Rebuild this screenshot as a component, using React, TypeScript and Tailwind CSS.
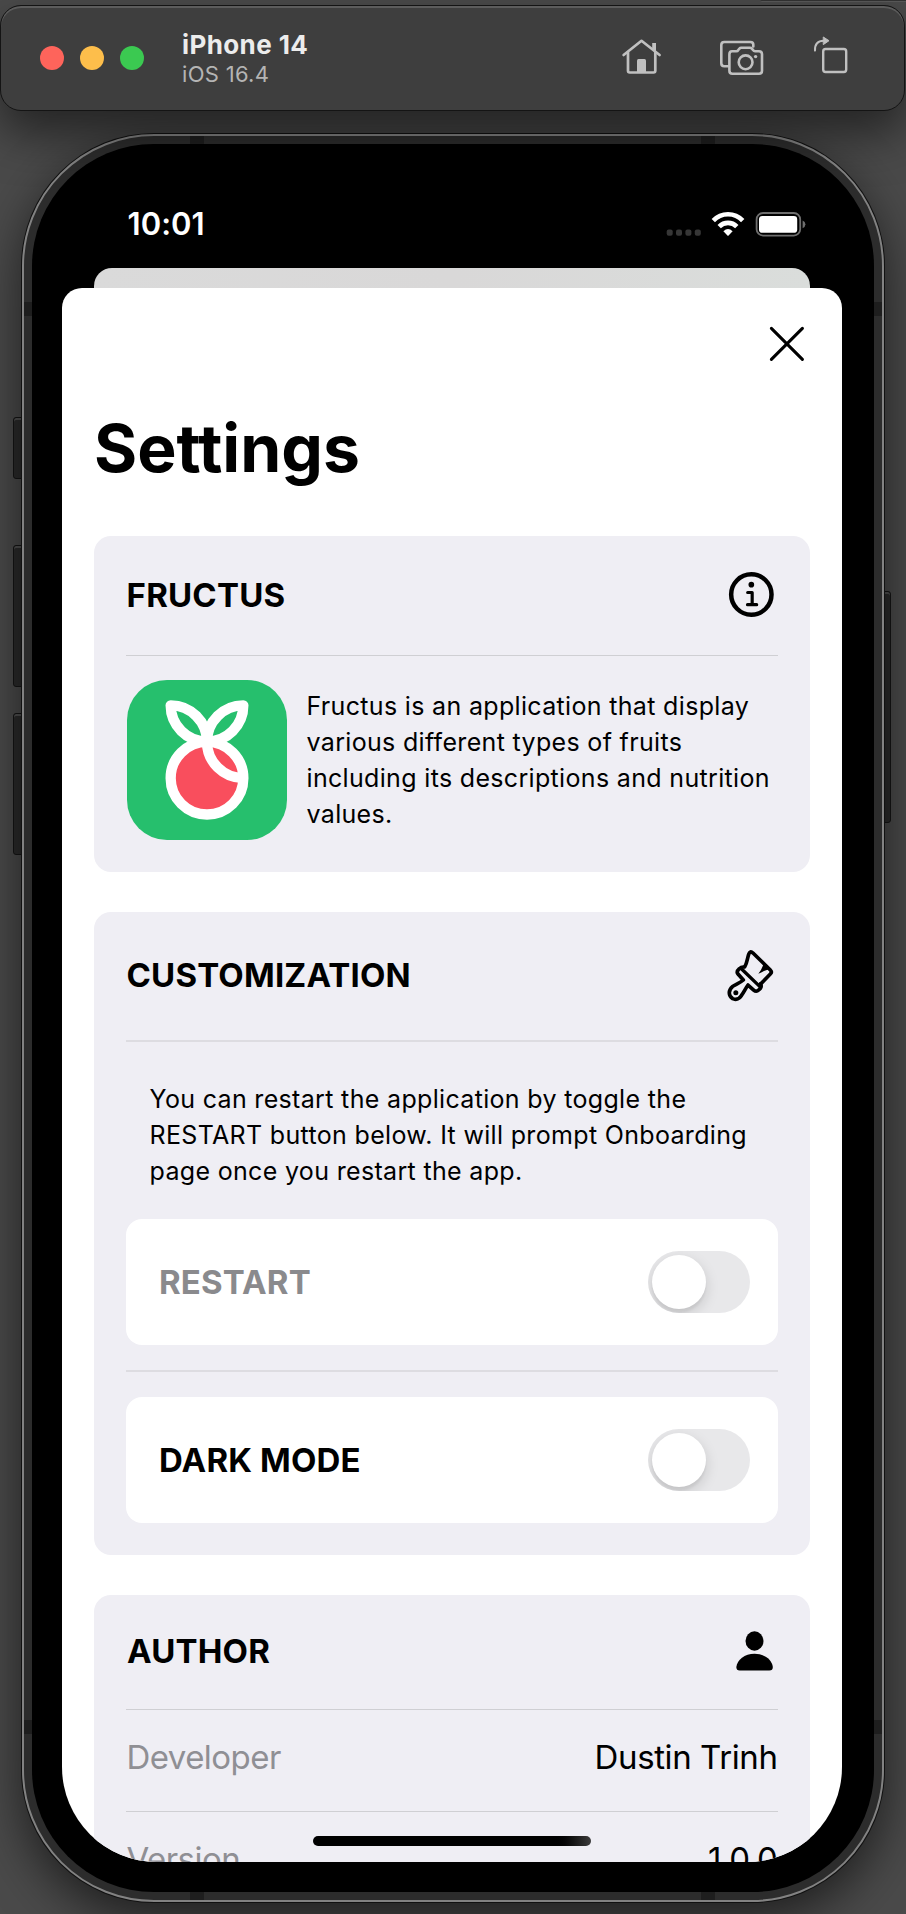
import type { ReactNode } from "react";

function HomeIcon() {
  return (
    <svg viewBox="620 36 42 42" className="h-[42px] w-[42px]" fill="none" stroke="#c0c0c0" strokeWidth="2.7" strokeLinecap="round" strokeLinejoin="round">
      <path d="M623.6 54 L641.5 39.8 L659.6 54" />
      <path d="M628 51.5 V69.8 Q628 71.5 629.7 71.5 H653.6 Q655.3 71.5 655.3 69.8 V51.5" />
      <path d="M652.2 42 H656 V50.5 L652.2 47.5 Z" fill="#c0c0c0" stroke="none" />
      <path d="M637 72 V59.5 Q637 58 638.5 58 H644.5 Q646 58 646 59.5 V72 Z" fill="#c0c0c0" stroke="none" />
    </svg>
  );
}

function ScreenshotIcon() {
  return (
    <svg viewBox="718 36 46 42" className="h-[42px] w-[46px]" fill="none" stroke="#c0c0c0" strokeWidth="2.6" strokeLinecap="round" strokeLinejoin="round">
      <path d="M753.3 45.5 V43.8 Q753.3 41 750.5 41 H724.3 Q721.3 41 721.3 44 V62.3 Q721.3 65.3 724.3 65.3 H728" />
      <path d="M732 50.2 H736.3 Q737.6 50.2 738.3 49 L739.4 47.6 Q740 46.8 741.3 46.8 H750 Q751.3 46.8 751.9 47.6 L753 49 Q753.8 50.2 755 50.2 H759 Q762 50.2 762 53.2 V69.8 Q762 72.8 759 72.8 H732.4 Q729.4 72.8 729.4 69.8 V53.2 Q729.4 50.2 732 50.2 Z" />
      <circle cx="745.6" cy="61.3" r="6.9" />
      <circle cx="755.6" cy="55.6" r="1.7" fill="#c0c0c0" stroke="none" />
    </svg>
  );
}

function RotateIcon() {
  return (
    <svg viewBox="812 34 36 46" className="h-[46px] w-9" fill="none" stroke="#c0c0c0" strokeWidth="2.4" strokeLinecap="round" strokeLinejoin="round">
      <rect x="823.2" y="48" width="23" height="23" rx="2.4" />
      <path d="M815 49.6 C814.6 43 818 39.8 823.5 39.8" strokeWidth="2" />
      <path d="M823.6 36.2 L829 39.7 L823.6 43.4 Z" fill="#c0c0c0" strokeWidth="1" />
    </svg>
  );
}

function StatusIcons() {
  return (
    <svg viewBox="664 208 144 30" className="h-[30px] w-36">
      <g fill="#363636">
        <rect x="666.7" y="228.6" width="6" height="6.2" rx="2" />
        <rect x="676" y="228.6" width="6" height="6.2" rx="2" />
        <rect x="685.4" y="228.6" width="6" height="6.2" rx="2" />
        <rect x="694.8" y="228.6" width="6" height="6.2" rx="2" />
      </g>
      <g fill="none" stroke="#fff" strokeWidth="4.6">
        <path d="M713.3 219.6 A20.3 20.3 0 0 1 742.7 219.6" />
        <path d="M719.2 225.6 A12.2 12.2 0 0 1 736.8 225.6" />
      </g>
      <path d="M723.4 230.3 Q728 225.7 732.6 230.3 L728.6 234.4 Q728 235 727.4 234.4 Z" fill="#fff" />
      <rect x="756.6" y="212" width="43.6" height="22.6" rx="6.4" fill="none" stroke="#6e6e6e" strokeWidth="1.8" />
      <rect x="759" y="215" width="38.2" height="16.8" rx="3.4" fill="#fff" />
      <path d="M802.6 219.4 Q805.4 220.6 805.4 223.3 Q805.4 226 802.6 227.2 Z" fill="#6e6e6e" />
    </svg>
  );
}

function InfoIcon() {
  return (
    <svg viewBox="825 873 140 140" className="mr-[3px] h-[46.7px] w-[46.7px]" fill="none" stroke="#000" strokeLinecap="round" strokeLinejoin="round">
      <circle cx="895" cy="943.5" r="60.5" strokeWidth="13.5" />
      <circle cx="895" cy="914" r="8.5" fill="#000" stroke="none" />
      <path d="M884 937.5 H897.5 V973.5 M883.5 974 H911" strokeWidth="9.5" />
    </svg>
  );
}

function BrushIcon() {
  return (
    <svg viewBox="815 920 153 170" className="mr-[2px] h-[56.7px] w-[51px]" fill="none" stroke="#000" strokeWidth="11" strokeLinecap="round" strokeLinejoin="round">
      <path d="M874.5 979 C881 968 882 954 886 942 Q890 930 899 938 L951 989 Q957 995 951 1001 L921 1032" />
      <path d="M864 985 L919 1038" strokeWidth="10" />
      <path d="M872 980 Q864 979 858 985 Q848 994 854 1001 L870 1019 C860 1028 846 1032 838 1038 C824 1050 825 1067 838 1075 C849 1080 859 1074 864 1066 C872 1055 876 1045 884 1034 L901 1049 Q909 1056 916 1049 L921 1044 Q926 1037 921 1031" />
      <path d="M932 968 L949 986 L932 992 Q924 997 915 1000 Q925 988 928 978 Z" fill="#000" stroke="none" />
      <circle cx="847.5" cy="1057" r="7.5" fill="#000" stroke="none" />
    </svg>
  );
}

function PersonIcon() {
  return (
    <svg viewBox="845 211 117 125" className="mr-[4.5px] h-[41.7px] w-[39px]" fill="#000">
      <ellipse cx="903.5" cy="244" rx="27" ry="29" />
      <path d="M859 332.5 Q849 332.5 849 322 C851 300 874 282 903.5 282 C933 282 956 300 958.5 322 Q958.5 332.5 948 332.5 Z" />
    </svg>
  );
}

function FructusLogo() {
  return (
    <div className="ml-[0.5px] h-40 w-40 shrink-0 overflow-hidden rounded-[40px] bg-[#26bf6d]">
      <svg viewBox="140 120 480 480" className="h-40 w-40" fill="none" stroke="#fff" strokeWidth="31" strokeLinejoin="round">
        <circle cx="380" cy="414.5" r="109" fill="#f94e5d" />
        <path d="M271 196 A109 109 0 0 1 380 305 A109 109 0 0 1 271 196 Z" />
        <path d="M489 196 A109 109 0 0 0 380 305 A109 109 0 0 0 489 196 Z" />
        <path d="M380 305 A109 109 0 0 0 489 414" />
      </svg>
    </div>
  );
}

function Toggle() {
  return (
    <div className="h-[62px] w-[102px] overflow-hidden rounded-full bg-[#e8e8ea] p-1">
      <div className="h-[54px] w-[54px] rounded-full bg-white shadow-[0_5px_14px_rgba(0,0,0,0.15),0_4px_2px_rgba(0,0,0,0.04)]" />
    </div>
  );
}

function CardHeader({ title, className, icon }: { title: string; className: string; icon: ReactNode }) {
  return (
    <div className={`flex items-center justify-between ${className}`}>
      <h2 className="text-[33px] leading-10 font-bold tracking-[0.18px]">{title}</h2>
      {icon}
    </div>
  );
}

function ToggleRow({ label, className }: { label: string; className: string }) {
  return (
    <div className="flex h-[126px] items-center justify-between rounded-[16px] bg-white pr-7 pl-[33px]">
      <span className={`text-[33px] leading-10 font-bold tracking-[0.15px] ${className}`}>{label}</span>
      <Toggle />
    </div>
  );
}

function InfoRow({ label, value }: { label: string; value: string }) {
  return (
    <div className="flex h-[101px] shrink-0 items-center justify-between pr-[0.5px] pb-[7px] pl-[0.5px] text-[33px] leading-10">
      <span className="tracking-[-0.55px] text-[#8f8f94]">{label}</span>
      <span className="tracking-[-0.4px]">{value}</span>
    </div>
  );
}

function SideButton({ className }: { className: string }) {
  return <div className={`absolute border border-[#151515] bg-[#2b2b2b] shadow-[inset_0_2px_0_#505050] ${className}`} />;
}

export default function App() {
  return (
    <div className="h-[1914px] w-[906px] overflow-hidden bg-[#4a4a4a] font-['Inter',sans-serif] text-black">
      <div className="relative z-10 flex justify-end">
        <div className="h-[2px] w-[146px] rounded-bl-lg border-b border-[#5a5a5a] bg-[#333]" />
      </div>
      <header className="relative z-10 mt-[3px] flex h-[106px] w-[905px] items-center justify-between rounded-[21px] border border-[#141414] bg-[#3e3e3e] pr-[56px] pl-[39px] shadow-[inset_0_2px_0_#5c5c5c,0_22px_46px_rgba(0,0,0,0.5)]">
        <div className="flex items-center">
          <div className="flex gap-4">
            <span className="h-6 w-6 rounded-full bg-[#fe645b]" />
            <span className="h-6 w-6 rounded-full bg-[#fdbe4b]" />
            <span className="h-6 w-6 rounded-full bg-[#3bc951]" />
          </div>
          <div className="ml-[38px]">
            <div className="text-[26px] leading-[30px] font-bold tracking-[0.4px] text-[#ececec]">iPhone 14</div>
            <div className="mt-px text-[22px] leading-[26px] tracking-[0.3px] text-[#b4b4b4]">iOS 16.4</div>
          </div>
        </div>
        <div className="flex items-center">
          <HomeIcon />
          <span className="ml-14 flex"><ScreenshotIcon /></span>
          <span className="ml-12 flex"><RotateIcon /></span>
        </div>
      </header>

      <div className="relative mt-[23px] ml-[22px] h-[1768px] w-[862px]">
        <SideButton className="top-[283px] -left-[9px] h-[62px] w-[10px] rounded-l-[3px]" />
        <SideButton className="top-[411px] -left-[9px] h-[142px] w-[10px] rounded-l-[3px]" />
        <SideButton className="top-[579px] -left-[9px] h-[142px] w-[10px] rounded-l-[3px]" />
        <SideButton className="top-[457px] -right-[7px] h-[232px] w-[8px] rounded-r-[3px]" />

        <div className="relative h-[1768px] w-[862px] rounded-[132px] border-2 border-[#828282] bg-[#2c2c2c] p-2 shadow-[0_0_0_1px_#111,0_16px_50px_rgba(0,0,0,0.6)]">
          <div className="absolute top-0 left-[166px] h-2 w-[14px] bg-[#1e1e1e]" />
          <div className="absolute top-0 left-[677px] h-2 w-[14px] bg-[#1e1e1e]" />
          <div className="absolute bottom-0 left-[166px] h-2 w-[14px] bg-[#1e1e1e]" />
          <div className="absolute bottom-0 left-[677px] h-2 w-[14px] bg-[#1e1e1e]" />
          <div className="absolute top-[166px] left-0 h-[14px] w-2 bg-[#1e1e1e]" />
          <div className="absolute top-[166px] right-0 h-[14px] w-2 bg-[#1e1e1e]" />
          <div className="absolute bottom-[166px] left-0 h-[14px] w-2 bg-[#1e1e1e]" />
          <div className="absolute right-0 bottom-[166px] h-[14px] w-2 bg-[#1e1e1e]" />

          <div className="flex h-[1748px] w-[842px] flex-col rounded-[122px] bg-black pl-[30px]">
            <div className="flex h-[124px] items-end justify-between pr-[66px] pb-[29px] pl-[65.5px]">
              <span className="text-[31px] leading-[31px] font-semibold tracking-[0.05px] text-white">10:01</span>
              <StatusIcons />
            </div>
            <div className="ml-8 h-5 w-[716px] rounded-t-[18px] bg-linear-to-r from-[#dadada] via-[#d9d8d8] to-[#dadddb]" />

            <main className="relative flex h-[1574px] w-[780px] flex-col overflow-hidden rounded-t-[20px] rounded-b-[95px] bg-white px-8">
              <div className="flex justify-end pt-[38px] pr-[5px]">
                <svg viewBox="0 0 36 36" className="h-9 w-9" stroke="#000" strokeWidth="3.1" strokeLinecap="round">
                  <path d="M2.4 2.4 L33.4 33.4 M33.4 2.4 L2.4 33.4" />
                </svg>
              </div>
              <h1 className="mt-[46px] text-[66px] leading-[80px] font-bold tracking-[-0.05px]">Settings</h1>

              <section className="mt-12 flex h-[336px] shrink-0 flex-col rounded-[17px] bg-[#efeef4] px-8">
                <CardHeader title="FRUCTUS" className="h-[119px] shrink-0 pb-[2px] pl-[0.6px]" icon={<InfoIcon />} />
                <div className="h-px shrink-0 bg-[#cfcfd3]" />
                <div className="mt-6 flex items-center">
                  <FructusLogo />
                  <p className="ml-5 text-[25px] leading-9 tracking-[0.33px] whitespace-nowrap">
                    Fructus is an application that display<br />
                    various different types of fruits<br />
                    including its descriptions and nutrition<br />
                    values.
                  </p>
                </div>
              </section>

              <section className="mt-10 flex h-[643px] shrink-0 flex-col rounded-[17px] bg-[#efeef4] px-8">
                <CardHeader title="CUSTOMIZATION" className="h-[128px] shrink-0 pb-[2px] pl-[0.5px]" icon={<BrushIcon />} />
                <div className="h-[2px] shrink-0 bg-[#dddce1]" />
                <p className="mt-[39px] ml-[23.5px] text-[25px] leading-9 tracking-[0.33px] whitespace-nowrap">
                  You can restart the application by toggle the<br />
                  RESTART button below. It will prompt Onboarding<br />
                  page once you restart the app.
                </p>
                <div className="mt-[30px] flex flex-col">
                  <ToggleRow label="RESTART" className="text-[#8a8a8d]" />
                  <div className="mt-[25px] mb-[25px] h-[2px] bg-[#dddce1]" />
                  <ToggleRow label="DARK MODE" className="text-black" />
                </div>
              </section>

              <section className="mt-10 flex h-[400px] shrink-0 flex-col rounded-[17px] bg-[#efeef4] px-8">
                <CardHeader title="AUTHOR" className="h-[114px] shrink-0 pb-[2px] pl-px" icon={<PersonIcon />} />
                <div className="h-px shrink-0 bg-[#cfcfd3]" />
                <InfoRow label="Developer" value="Dustin Trinh" />
                <div className="h-px shrink-0 bg-[#cfcfd3]" />
                <InfoRow label="Version" value="1.0.0" />
              </section>

              <div className="absolute bottom-4 left-[251px] h-[10px] w-[278px] rounded-full bg-linear-to-r from-black from-86% to-[#3c3c3c]" />
            </main>
          </div>
        </div>
      </div>
    </div>
  );
}
